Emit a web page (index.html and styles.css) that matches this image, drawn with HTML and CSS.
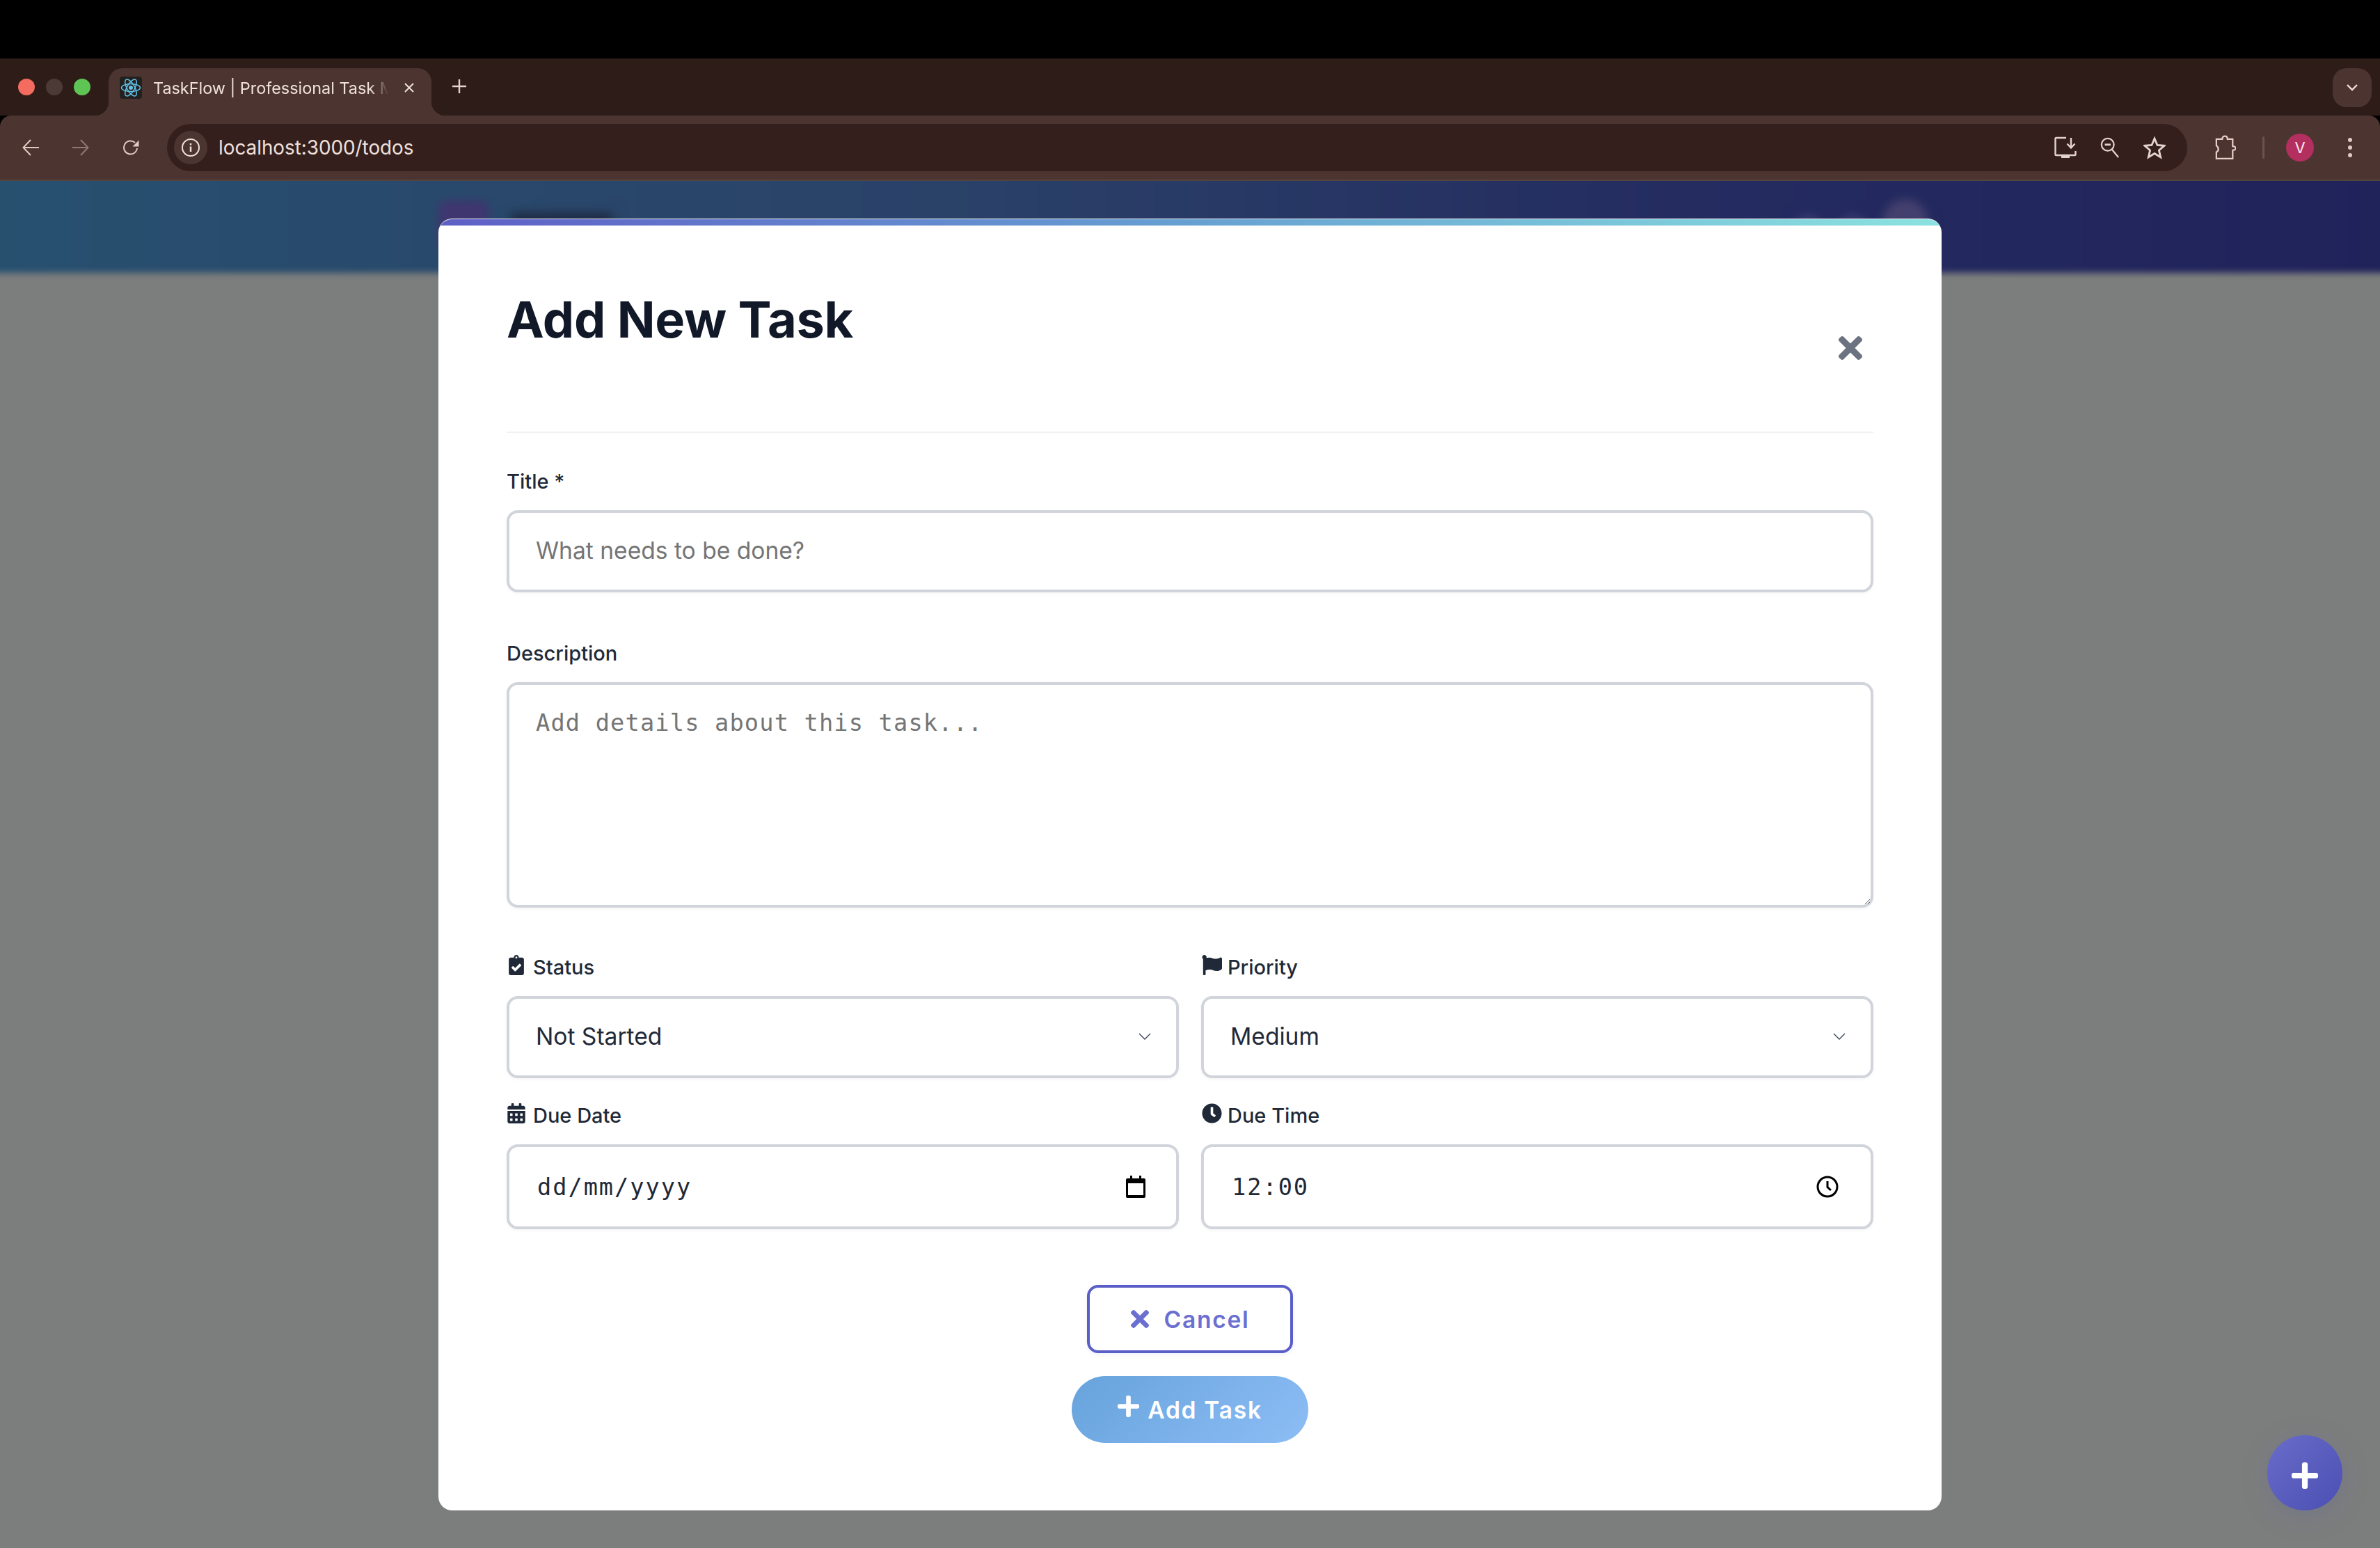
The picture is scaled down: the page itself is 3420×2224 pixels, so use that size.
FILE: index.html
```html
<!DOCTYPE html>
<html lang="en">
<head>
<meta charset="utf-8">
<title>TaskFlow | Professional Task Manager</title>
<link rel="stylesheet" href="styles.css">
</head>
<body>
<div class="app">
  <div class="topbar"></div>
  <div class="tabstrip">
    <div class="lights"><span class="light red"></span><span class="light grey"></span><span class="light green"></span></div>
    <div class="tab">
      <span class="favicon">
        <svg viewBox="0 0 32 32" width="32" height="32" fill="none" stroke="#61c3e8" stroke-width="1.5"><circle cx="16" cy="16" r="3" fill="#61c3e8" stroke="none"/><ellipse cx="16" cy="16" rx="13.5" ry="5.5"/><ellipse cx="16" cy="16" rx="13.5" ry="5.5" transform="rotate(60 16 16)"/><ellipse cx="16" cy="16" rx="13.5" ry="5.5" transform="rotate(120 16 16)"/></svg>
      </span>
      <span class="tab-title">TaskFlow | Professional Task Manager</span>
      <svg class="tab-close" viewBox="0 0 16 16" width="16" height="16" fill="none" stroke="#f0e0dc" stroke-width="2"><path d="M2 2l12 12M14 2L2 14"/></svg>
    </div>
    <svg class="new-tab" viewBox="0 0 20 20" width="20" height="20" fill="none" stroke="#e6d2cd" stroke-width="2.4"><path d="M10 0v20M0 10h20"/></svg>
    <div class="tab-list"><svg viewBox="0 0 16 10" width="16" height="10" fill="none" stroke="#f0e0dc" stroke-width="2.4"><path d="M1 1l7 7 7-7"/></svg></div>
  </div>
  <div class="toolbar">
    <svg class="nav-ic" viewBox="0 0 24 24" width="24" height="24" fill="none" stroke="#e3c8c2" stroke-width="2"><path d="M24 12H1.5M12 1L1.5 12 12 23"/></svg>
    <svg class="nav-ic" viewBox="0 0 24 24" width="24" height="24" fill="none" stroke="#8d7a74" stroke-width="2"><path d="M0 12h22.5M12 1l10.5 11L12 23"/></svg>
    <svg class="nav-ic" viewBox="0 0 24 24" width="24" height="24" fill="none" stroke="#e3c8c2" stroke-width="2"><path d="M21 13a9.5 9.5 0 1 1-3-8"/><path d="M23.5 1.5v9h-9z" fill="#e3c8c2" stroke="none"/></svg>
    <div class="omnibox">
      <span class="site-info"><svg viewBox="0 0 26 26" width="26" height="26" fill="none" stroke="#f0e0dc" stroke-width="2"><circle cx="13" cy="13" r="12"/><path d="M13 11.500v7.500M13 7v2.500" stroke-width="2.500"/></svg></span>
      <span class="url">localhost:3000/todos</span>
      <span class="omni-icons">
        <svg viewBox="0 0 32 32" width="32" height="38" fill="none" stroke="#e3d3cf" stroke-width="2.400"><path d="M17 2H2.500a1 1 0 0 0-1 1v23a1 1 0 0 0 1 1h27a1 1 0 0 0 1-1v-5"/><path d="M10 27h12v4H10z" fill="#e3d3cf" stroke="none"/><path d="M24 2v14M18.500 10.500l5.500 6 5.500-6"/></svg>
        <svg viewBox="0 0 30 32" width="28" height="32" fill="none" stroke="#e3d3cf" stroke-width="2.400"><circle cx="11.500" cy="11.500" r="9.500"/><path d="M18 19l10 12"/><path d="M7 11.500h9" stroke-width="3"/></svg>
        <svg viewBox="0 0 32 32" width="32" height="36" fill="none" stroke="#e3d3cf" stroke-width="2.800"><path d="M16 3l4 9.500 10 .8-7.600 6.600 2.300 10L16 24.500 7.300 29.900l2.300-10L2 13.300l10-.8z"/></svg>
      </span>
    </div>
    <svg class="ext-ic" viewBox="0 0 32 40" width="30" height="40" fill="none" stroke="#e8cdc7" stroke-width="2.400"><path d="M2 7h9c0-6 8-6 8 0h8v11c6 0 6 6 0 6v13H2V27c4-2 4-7 0-10z"/></svg>
    <span class="sep"></span>
    <span class="avatar">V</span>
    <span class="dots"><i></i><i></i><i></i></span>
  </div>
  <div class="page">
    <div class="app-header">
      <span class="blur-logo"></span>
      <span class="blur-text"></span>
      <span class="blur-spacer"></span>
      <span class="blur-dot small"></span>
      <span class="blur-dot small"></span>
      <span class="blur-dot"></span>
    </div>
    <div class="modal">
      <div class="modal-bar"></div>
      <div class="modal-body">
        <header class="modal-header">
          <h1 class="modal-title">Add New Task</h1>
          <svg class="close-ic" viewBox="0 0 352 352" width="34" height="34" fill="#6b7280"><path transform="translate(0 -80)" d="M242.720 256l100.070-100.070c12.280-12.280 12.280-32.190 0-44.480l-22.240-22.240c-12.280-12.280-32.190-12.280-44.480 0L176 189.280 75.930 89.210c-12.280-12.280-32.190-12.280-44.480 0L9.210 111.450c-12.280 12.280-12.280 32.190 0 44.480L109.280 256 9.210 356.070c-12.280 12.280-12.280 32.190 0 44.480l22.240 22.240c12.280 12.280 32.200 12.280 44.480 0L176 322.720l100.070 100.070c12.280 12.280 32.200 12.280 44.480 0l22.240-22.240c12.280-12.280 12.280-32.190 0-44.480L242.720 256z"/></svg>
        </header>
        <form class="form">
          <div class="field title-field">
            <label class="label">Title *</label>
            <input class="control" type="text" placeholder="What needs to be done?">
          </div>
          <div class="field desc-field">
            <label class="label">Description</label>
            <textarea class="control area" placeholder="Add details about this task..."></textarea>
          </div>
          <div class="grid">
            <div class="field">
              <label class="label"><span class="lab-box"><svg class="lab-clip" viewBox="0 0 384 512" width="22" height="29" fill="#1f2937"><path d="M336 64h-80c0-35.300-28.700-64-64-64s-64 28.700-64 64H48C21.500 64 0 85.500 0 112v352c0 26.500 21.500 48 48 48h288c26.500 0 48-21.500 48-48V112c0-26.500-21.500-48-48-48zM192 40c13.300 0 24 10.700 24 24s-10.700 24-24 24-24-10.700-24-24 10.700-24 24-24zm121.200 231.800l-143 141.800c-4.700 4.700-12.300 4.600-17-.1l-82.600-83.300c-4.700-4.700-4.600-12.300.1-17L99.100 285c4.700-4.700 12.300-4.600 17 .1l46 46.400 106-105.200c4.700-4.700 12.300-4.600 17 .1l28.200 28.400c4.700 4.800 4.600 12.300-.1 17z"/></svg></span>Status</label>
              <div class="control select"><span>Not Started</span><svg viewBox="0 0 18 10" width="18" height="10" fill="none" stroke="#374151" stroke-width="1.300"><path d="M1 1l8 8 8-8"/></svg></div>
            </div>
            <div class="field">
              <label class="label"><span class="lab-box"><svg viewBox="0 0 512 512" width="29" height="29" fill="#1f2937"><path d="M349.565 98.783C295.978 98.783 251.721 64 184.348 64c-24.955 0-47.309 4.384-68.045 12.013a55.947 55.947 0 0 0 3.586-23.562C118.117 24.015 94.806 1.206 66.338.048 34.345-1.254 8 24.296 8 56c0 19.026 9.497 35.825 24 45.945V488c0 13.255 10.745 24 24 24h16c13.255 0 24-10.745 24-24v-94.400c28.311-12.064 63.582-22.122 114.435-22.122 53.588 0 97.844 34.783 165.217 34.783 48.169 0 86.667-16.294 122.505-40.858C506.840 359.452 512 349.571 512 339.045v-243.100c0-23.393-24.269-38.870-45.485-29.016-34.338 15.948-76.454 31.854-116.950 31.854z"/></svg></span>Priority</label>
              <div class="control select"><span>Medium</span><svg viewBox="0 0 18 10" width="18" height="10" fill="none" stroke="#374151" stroke-width="1.300"><path d="M1 1l8 8 8-8"/></svg></div>
            </div>
            <div class="field">
              <label class="label"><span class="lab-box"><svg viewBox="0 0 448 512" width="26" height="29" fill="#1f2937"><path d="M0 464c0 26.500 21.500 48 48 48h352c26.500 0 48-21.500 48-48V192H0v272zm320-196c0-6.600 5.400-12 12-12h40c6.600 0 12 5.400 12 12v40c0 6.600-5.400 12-12 12h-40c-6.600 0-12-5.400-12-12v-40zm0 128c0-6.600 5.400-12 12-12h40c6.600 0 12 5.400 12 12v40c0 6.600-5.400 12-12 12h-40c-6.600 0-12-5.400-12-12v-40zM192 268c0-6.600 5.400-12 12-12h40c6.600 0 12 5.400 12 12v40c0 6.600-5.400 12-12 12h-40c-6.600 0-12-5.400-12-12v-40zm0 128c0-6.600 5.400-12 12-12h40c6.600 0 12 5.400 12 12v40c0 6.600-5.400 12-12 12h-40c-6.600 0-12-5.400-12-12v-40zM64 268c0-6.600 5.400-12 12-12h40c6.600 0 12 5.400 12 12v40c0 6.600-5.400 12-12 12H76c-6.600 0-12-5.400-12-12v-40zm0 128c0-6.600 5.400-12 12-12h40c6.600 0 12 5.400 12 12v40c0 6.600-5.400 12-12 12H76c-6.600 0-12-5.400-12-12v-40zM400 64h-48V16c0-8.800-7.200-16-16-16h-32c-8.800 0-16 7.200-16 16v48H160V16c0-8.800-7.200-16-16-16h-32c-8.800 0-16 7.200-16 16v48H48C21.500 64 0 85.500 0 112v48h448v-48c0-26.500-21.500-48-48-48z"/></svg></span>Due Date</label>
              <div class="control picker"><span class="mono">dd/mm/yyyy</span><svg viewBox="0 0 28 32" width="28" height="32"><path d="M6 0h3v4h10V0h3v4h4a2 2 0 0 1 2 2v24a2 2 0 0 1-2 2H2a2 2 0 0 1-2-2V6a2 2 0 0 1 2-2h4z" fill="#000"/><path d="M3 11h22v17H3z" fill="#fff"/></svg></div>
            </div>
            <div class="field">
              <label class="label"><span class="lab-box"><svg viewBox="0 0 512 512" width="29" height="29" fill="#1f2937"><path d="M256,8C119,8,8,119,8,256S119,504,256,504,504,393,504,256,393,8,256,8Zm92.490,313h0l-20,25a16,16,0,0,1-22.490,2.500h0l-67-49.720a40,40,0,0,1-15-31.230V112a16,16,0,0,1,16-16h32a16,16,0,0,1,16,16V256l58,42.500A16,16,0,0,1,348.490,321Z"/></svg></span>Due Time</label>
              <div class="control picker time"><span class="mono">12:00</span><svg viewBox="0 0 32 32" width="32" height="32" fill="none" stroke="#000" stroke-width="3"><circle cx="16" cy="16" r="14"/><path d="M16 8v8.500l5 4.500"/></svg></div>
            </div>
          </div>
          <div class="actions">
            <button type="button" class="btn cancel"><svg viewBox="0 0 352 352" width="26" height="26" fill="#6b6fcf"><path transform="translate(0 -80)" d="M242.720 256l100.070-100.070c12.280-12.280 12.280-32.190 0-44.480l-22.240-22.240c-12.280-12.280-32.190-12.280-44.480 0L176 189.280 75.930 89.210c-12.280-12.280-32.190-12.280-44.480 0L9.210 111.450c-12.280 12.280-12.280 32.190 0 44.480L109.280 256 9.210 356.070c-12.280 12.280-12.280 32.190 0 44.480l22.240 22.240c12.280 12.280 32.200 12.280 44.480 0L176 322.720l100.070 100.070c12.280 12.280 32.200 12.280 44.480 0l22.240-22.240c12.280-12.280 12.280-32.190 0-44.480L242.720 256z"/></svg>Cancel</button>
            <button type="button" class="btn add"><svg viewBox="0 0 448 448" width="31" height="31" fill="#fff"><path transform="translate(0 -32)" d="M416 208H272V64c0-17.670-14.330-32-32-32h-32c-17.670 0-32 14.330-32 32v144H32c-17.670 0-32 14.330-32 32v32c0 17.670 14.330 32 32 32h144v144c0 17.670 14.330 32 32 32h32c17.670 0 32-14.330 32-32V304h144c17.670 0 32-14.330 32-32v-32c0-17.670-14.330-32-32-32z"/></svg>Add Task</button>
          </div>
        </form>
      </div>
    </div>
    <button type="button" class="fab"><svg viewBox="0 0 448 448" width="38" height="38" fill="#fff"><path transform="translate(0 -32)" d="M416 208H272V64c0-17.670-14.330-32-32-32h-32c-17.670 0-32 14.330-32 32v144H32c-17.670 0-32 14.330-32 32v32c0 17.670 14.330 32 32 32h144v144c0 17.670 14.330 32 32 32h32c17.670 0 32-14.330 32-32V304h144c17.670 0 32-14.330 32-32v-32c0-17.670-14.330-32-32-32z"/></svg></button>
  </div>
</div>
</body>
</html>
```

FILE: styles.css
```css
* { box-sizing: border-box; }
html, body { margin: 0; padding: 0; }
body { width: 3420px; height: 2224px; overflow: hidden; font-family: Inter, "Liberation Sans", sans-serif; background: #000; }
.app { display: flex; flex-direction: column; height: 2224px; }
.topbar { height: 84px; background: #000; flex: none; }

.tabstrip { height: 82px; flex: none; background: #2e1c19; display: flex; align-items: flex-start; position: relative; }
.lights { display: flex; gap: 16px; padding: 29px 0 0 26px; width: 156px; flex: none; }
.light { width: 24px; height: 24px; border-radius: 50%; }
.red { background: #f46b5f; }
.grey { background: #4c3a37; }
.green { background: #5ec453; }
.tab { width: 464px; height: 68px; margin-top: 14px; background: #4c3530; border-radius: 20px 20px 0 0; display: flex; align-items: center; padding: 0 24px 12px 16px; position: relative; flex: none; }
.tab::before, .tab::after { content: ""; position: absolute; bottom: 0; width: 20px; height: 20px; }
.tab::before { left: -20px; background: radial-gradient(circle at 0 0, transparent 20px, #4c3530 20.5px); }
.tab::after { right: -20px; background: radial-gradient(circle at 100% 0, transparent 20px, #4c3530 20.5px); }
.favicon { width: 32px; height: 32px; background: #23211f; border-radius: 4px; flex: none; display: block; }
.favicon svg { display: block; }
.tab-title { margin-left: 16px; width: 338px; white-space: nowrap; overflow: hidden; color: #f0e0dc; font-size: 23.4px; -webkit-mask-image: linear-gradient(90deg, #000 92%, transparent 100%); mask-image: linear-gradient(90deg, #000 92%, transparent 100%); flex: none; }
.tab-close { margin-left: 22px; flex: none; }
.new-tab { margin: 30px 0 0 30px; flex: none; }
.tab-list { margin: 14px 12px 0 auto; width: 56px; height: 56px; border-radius: 20px; background: #4c3530; display: flex; align-items: center; justify-content: center; flex: none; }

.toolbar { height: 94px; flex: none; background: #4c3530; border-bottom: 2px solid #55433e; border-radius: 16px 16px 0 0; display: flex; align-items: center; padding: 0 0 0 32px; position: relative; }
.nav-ic { margin-right: 48px; flex: none; }
.omnibox { margin-left: -8px; width: 2903px; height: 68px; border-radius: 34px; background: #351f1c; display: flex; align-items: center; padding: 0 31px 0 10px; flex: none; }
.site-info { width: 48px; height: 48px; border-radius: 50%; background: #4c3530; display: flex; align-items: center; justify-content: center; flex: none; }
.url { margin-left: 16px; color: #f0e0dc; font-size: 27.8px; }
.omni-icons { margin-left: auto; display: flex; align-items: center; gap: 34px; }
.ext-ic { margin-left: 40px; flex: none; }
.sep { width: 3px; height: 32px; background: #6b534d; margin-left: 38px; flex: none; border-radius: 2px; }
.avatar { width: 40px; height: 40px; border-radius: 50%; background: #b32f5f; color: #fbe9ee; font-size: 22px; display: flex; align-items: center; justify-content: center; margin-left: 31px; flex: none; }
.dots { margin-left: 49px; display: flex; flex-direction: column; gap: 5px; flex: none; }
.dots i { width: 6px; height: 6px; border-radius: 50%; background: #e3c8c2; display: block; }

.page { flex: 1; position: relative; overflow: hidden; background: #7c7e7d; }
.app-header { margin: -20px -20px 0; height: 152px; padding: 20px 670px 0 650px; display: flex; align-items: flex-start; background: linear-gradient(90deg, #27506f 0%, #2a4168 40%, #242c60 70%, #20225a 100%); filter: blur(5px); }
.blur-logo { width: 72px; height: 72px; margin-top: 28px; border-radius: 12px; background: #3f3670; flex: none; filter: blur(5px); }
.blur-text { width: 146px; height: 50px; margin: 46px 0 0 32px; background: #1f2a42; flex: none; filter: blur(6px); }
.blur-spacer { flex: 1; }
.blur-dot { width: 64px; height: 64px; margin: 26px 0 0 24px; border-radius: 50%; background: #44406e; flex: none; filter: blur(5px); }
.blur-dot.small { width: 40px; height: 40px; margin-top: 48px; background: #3a3a6e; }

.modal { position: absolute; top: 54px; left: 630px; width: 2160px; height: 1856px; background: #fff; border-radius: 20px; border-top: 1px solid #f2f2f2; overflow: hidden; display: flex; flex-direction: column; }
.modal-bar { height: 9px; flex: none; background: linear-gradient(90deg, #5f5fc6, #66a0d2 50%, #8be2df); }
.modal-body { padding: 0 98px; }
.modal-header { height: 298px; border-bottom: 2px solid #f0f1f2; display: flex; justify-content: space-between; align-items: flex-start; }
.modal-title { margin: 93px 0 0; font-size: 72px; line-height: 84px; font-weight: 700; color: #111827; letter-spacing: -0.300px; }
.close-ic { margin: 159px 16px 0 0; flex: none; }

.form { display: flex; flex-direction: column; }
.field { display: flex; flex-direction: column; }
.label { display: flex; align-items: flex-start; height: 40px; font-size: 29px; line-height: 39px; font-weight: 500; color: #1f2937; }
.grid .label { line-height: 36px; }
.lab-box { width: 38px; padding-left: 1px; flex: none; display: block; }
.lab-box svg { display: block; }
.lab-clip { margin-left: 2px; }
.control { width: 100%; border: 4px solid #d1d5db; border-radius: 16px; background: #fff; font-family: Inter, "Liberation Sans", sans-serif; font-size: 33.6px; color: #1f2937; height: 118px; padding: 0 38px 3px; box-shadow: 0 2px 4px rgba(0,0,0,.04); outline: none; }
.control::placeholder { color: #757575; opacity: 1; }
.title-field { margin-top: 50px; gap: 21px; }
.desc-field { margin-top: 68px; gap: 21px; }
.area { display: block; height: 324px; padding-top: 35px; font-family: "DejaVu Sans Mono", monospace; letter-spacing: 1.200px; line-height: 40px; resize: vertical; }
.grid { margin-top: 68px; display: grid; grid-template-columns: 1fr 1fr; column-gap: 32px; row-gap: 36px; }
.grid .field { gap: 19px; }
.select, .picker { display: flex; align-items: center; justify-content: space-between; }
.select svg { margin-right: -2px; flex: none; }
.picker { height: 122px; padding: 0 44px 0 38px; }
.picker.time { padding-right: 46px; }
.mono { font-family: "DejaVu Sans Mono", monospace; letter-spacing: 2px; color: #1f2937; margin-left: 2px; }
.actions { margin-top: 80px; display: flex; flex-direction: column; align-items: center; gap: 33px; }
.btn { display: flex; align-items: center; justify-content: center; font-family: Inter, "Liberation Sans", sans-serif; font-size: 33.6px; font-weight: 600; letter-spacing: 1.700px; cursor: pointer; }
.cancel { width: 296px; height: 98px; background: #fff; border: 4px solid #5a5fc8; border-radius: 16px; color: #6b6fcf; gap: 22px; box-shadow: 0 2px 6px rgba(90,95,200,.1); }
.add { width: 340px; height: 96px; border: 0; border-radius: 48px; background: linear-gradient(135deg, #67a3dc, #8dbdf5); color: #fff; gap: 12px; }
.add svg { margin-top: -10px; flex: none; }
.fab { position: absolute; right: 54px; bottom: 54px; width: 108px; height: 108px; border: 0; border-radius: 50%; background: linear-gradient(135deg, #6a6cc9, #4a4fb2); display: flex; align-items: center; justify-content: center; box-shadow: 0 8px 40px rgba(90,90,190,.18); padding: 8px 0 0; }
```
